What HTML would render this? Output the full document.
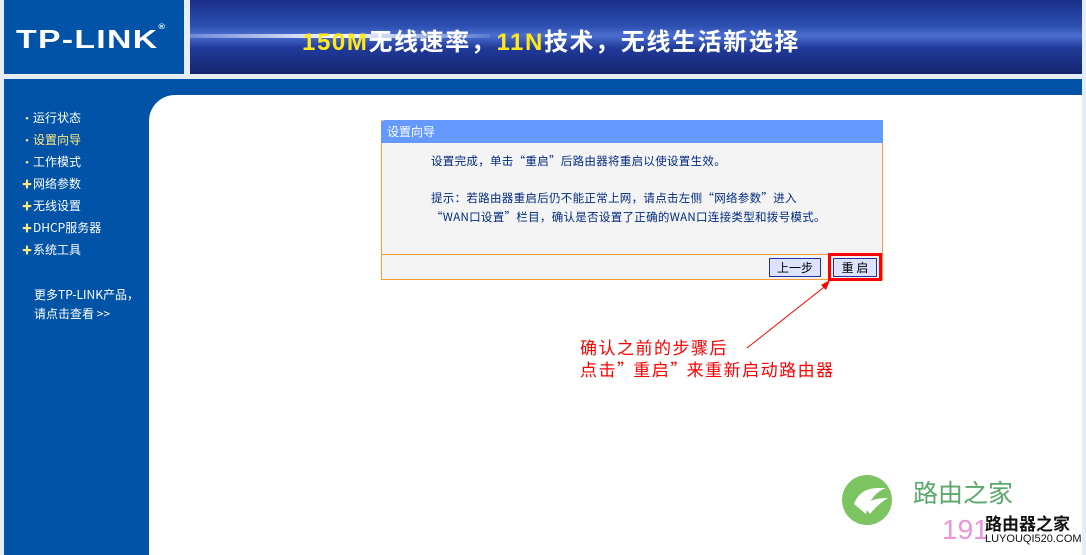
<!DOCTYPE html>
<html><head><meta charset="utf-8"><style>
body{margin:0;width:1086px;height:555px;background:#e6edf7;position:relative;overflow:hidden;font-family:"Liberation Sans","Noto Sans CJK SC",sans-serif}
.a{position:absolute}
.nav{color:#fff;font-size:12px;left:22px;font-family:"Noto Sans CJK SC",sans-serif}
.nav b{color:#ffe880;font-size:10px;display:inline-block;width:11px}
.cj{font-family:"Noto Sans CJK SC",sans-serif}
</style></head><body>
<div class="a" style="left:4px;top:0;width:180px;height:74px;background:#0053a6"></div>
<div class="a" style="left:16px;top:24px;color:#fff;font-weight:900;font-size:26px;letter-spacing:1px;transform:scaleX(1.3);transform-origin:left;font-family:'Liberation Sans',sans-serif">TP-LINK<span style="font-size:7px;vertical-align:top">®</span></div>
<div class="a" style="left:190px;top:0;width:892px;height:74px;background:linear-gradient(180deg,#1a2f8a 0%,#2d4fb0 35%,#4a6ed0 48%,#213a9a 65%,#14256e 100%)"></div>
<div class="a" style="left:190px;top:34px;width:300px;height:4px;background:linear-gradient(90deg,rgba(255,255,255,.2),#fff,rgba(255,255,255,0.1))"></div>
<div class="a cj" style="left:302px;top:22px;font-size:24px;font-weight:bold;color:#fff;white-space:nowrap;letter-spacing:1.6px"><span style="color:#ffe81a;font-family:'Liberation Sans'">150M</span>无线速率，<span style="color:#ffe81a;font-family:'Liberation Sans'">11N</span>技术，无线生活新选择</div>
<div class="a" style="left:4px;top:79px;width:1078px;height:16px;background:#0053a6"></div>
<div class="a" style="left:4px;top:95px;width:145px;height:460px;background:#0053a6"></div>
<div class="a" style="left:149px;top:95px;width:26px;height:26px;background:#0053a6"></div>
<div class="a" style="left:149px;top:95px;width:933px;height:460px;background:#fff;border-top-left-radius:26px"></div>
<div class="a nav" style="top:109px"><b>•</b>运行状态</div>
<div class="a nav" style="top:131px;color:#ffe880"><b>•</b>设置向导</div>
<div class="a nav" style="top:153px"><b>•</b>工作模式</div>
<div class="a nav" style="top:175px"><b>✚</b>网络参数</div>
<div class="a nav" style="top:197px"><b>✚</b>无线设置</div>
<div class="a nav" style="top:219px"><b>✚</b>DHCP服务器</div>
<div class="a nav" style="top:241px"><b>✚</b>系统工具</div>
<div class="a nav" style="top:285px;left:34px;line-height:19px">更多TP-LINK产品，<br>请点击查看 &gt;&gt;</div>
<div class="a" style="left:381px;top:120px;width:500px;height:159px;background:#f4f4f4;border:1px solid #ff9933;border-top:none"></div>
<div class="a cj" style="left:381px;top:120px;width:502px;height:23px;background:#6699ff;border-top-left-radius:4px;color:#fff;font-size:12px;line-height:23px;text-indent:6px">设置向导</div>
<div class="a cj" style="left:431px;top:153px;font-size:11.5px;color:#002a80;letter-spacing:0.3px">设置完成，单击“重启”后路由器将重启以使设置生效。</div>
<div class="a cj" style="left:431px;top:189px;font-size:11.5px;color:#002a80;line-height:19px;white-space:nowrap;letter-spacing:0.3px">提示：若路由器重启后仍不能正常上网，请点击左侧“网络参数”进入<br>“WAN口设置”栏目，确认是否设置了正确的WAN口连接类型和拨号模式。</div>
<div class="a" style="left:382px;top:254px;width:500px;height:1px;background:#ff9933"></div>
<div class="a cj" style="left:769px;top:258px;width:50px;height:17px;background:#dde3ff;border:1px solid #2030a0;font-size:12px;text-align:center;line-height:17px">上一步</div>
<div class="a" style="left:828px;top:253px;width:48px;height:22px;border:3px solid #f00"></div>
<div class="a cj" style="left:833px;top:258px;width:42px;height:17px;background:#dde3ff;border:1px solid #2030a0;font-size:12px;text-align:center;line-height:17px">重 启</div>
<svg class="a" style="left:0;top:0" width="1086" height="555"><line x1="747" y1="348" x2="828" y2="284" stroke="#f00" stroke-width="1"/><polygon points="830,280 821,285 826,290" fill="#f00"/></svg>
<div class="a cj" style="left:580px;top:336px;font-size:17px;color:#f00;line-height:22px;letter-spacing:1.5px;white-space:nowrap">确认之前的步骤后<br>点击<span style="letter-spacing:-6px">”</span>&nbsp;重启<span style="letter-spacing:-6px">”</span>&nbsp;来重新启动路由器</div>
<svg class="a" style="left:840px;top:474px" width="60" height="52"><circle cx="27" cy="26" r="25" fill="#7cc462"/><path d="M14 30 Q20 14 38 14 L46 14 Q30 20 26 40 Z" fill="#fff"/><path d="M24 32 Q30 24 48 24 Q38 30 30 40 Z" fill="#fff"/></svg>
<div class="a cj" style="left:913px;top:474px;font-size:25px;color:#5aa86a">路由之家</div>
<div class="a" style="left:942px;top:514px;font-size:28px;color:#e47cd0;opacity:.8">191</div>
<div class="a cj" style="left:985px;top:510px;font-size:17px;font-weight:bold;color:#111">路由器之家</div>
<div class="a" style="left:985px;top:533px;font-size:11px;color:#111">LUYOUQI520.COM</div>
</body></html>
